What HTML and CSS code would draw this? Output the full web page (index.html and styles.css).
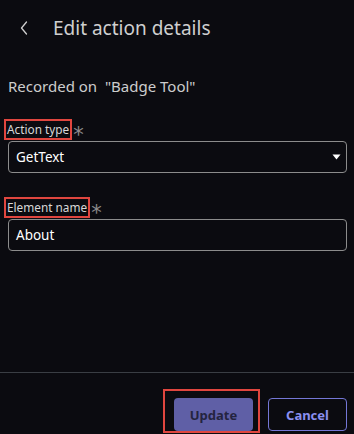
FILE: index.html
```html
<!DOCTYPE html>
<html>
<head>
<meta charset="utf-8">
<link rel="stylesheet" href="styles.css">
</head>
<body>
<div class="page">
  <div class="header">
    <svg class="back" width="8" height="14" viewBox="0 0 8 14"><path d="M6.5 1 L1.5 7 L6.5 13" fill="none" stroke="#d0d0d0" stroke-width="1.3" stroke-linecap="round" stroke-linejoin="round"/></svg>
    <span class="title">Edit action details</span>
  </div>
  <div class="recorded">Recorded on &nbsp;"Badge Tool"</div>
  <div class="field first">
    <div class="label-row"><span class="label hl">Action type</span><span class="req">*</span></div>
    <div class="box select"><span>GetText</span><svg width="9" height="6" viewBox="0 0 9 6"><path d="M0.5 0.5 H8.5 L4.5 5.5 Z" fill="#ffffff"/></svg></div>
  </div>
  <div class="field second">
    <div class="label-row"><span class="label hl">Element name</span><span class="req">*</span></div>
    <div class="box"><span>About</span></div>
  </div>
  <div class="spacer"></div>
  <div class="footer">
    <div class="hlbtn"><button class="btn primary">Update</button></div>
    <button class="btn secondary">Cancel</button>
  </div>
</div>
</body>
</html>
```
FILE: styles.css
```css
html, body {
  margin: 0;
  padding: 0;
  background: #0b0b10;
}
body {
  font-family: "Noto Sans", "Open Sans", sans-serif;
  color: #d6d6d6;
}
.page {
  width: 354px;
  height: 434px;
  display: flex;
  flex-direction: column;
}
.header {
  display: flex;
  align-items: center;
  height: 56px;
  padding-left: 20px;
}
.back {
  margin-right: 25px;
}
.title {
  font-size: 19px;
  color: #cfcfcf;
}
.recorded {
  margin-top: 20px;
  padding-left: 8px;
  font-size: 15px;
  color: #cdcdcd;
  line-height: 20px;
}
.field {
  padding: 0 7px 0 8px;
}
.first {
  margin-top: 23px;
}
.second {
  margin-top: 24px;
}
.label-row {
  display: flex;
  align-items: center;
  margin-left: -4px;
  height: 21px;
}
.label {
  font-size: 11.8px;
  color: #d8d8d8;
  line-height: 17px;
}
.hl {
  border: 2px solid #e0463f;
  padding: 0 1px;
}
.req {
  color: #8c8c8c;
  font-family: "DejaVu Sans", sans-serif;
  font-size: 21px;
  margin-left: 1px;
  line-height: 16px;
  position: relative;
  top: 5px;
}
.box {
  height: 32px;
  box-sizing: border-box;
  border: 1px solid #8c8c8c;
  border-radius: 4px;
  display: flex;
  align-items: center;
  justify-content: space-between;
  padding: 0 5px 0 7px;
  font-size: 13.5px;
  color: #ffffff;
  margin-top: 1px;
}
.spacer {
  flex: 1;
}
.footer {
  border-top: 1px solid #3a3e44;
  height: 60px;
  display: flex;
  align-items: flex-end;
  justify-content: flex-end;
  padding-right: 7px;
  padding-bottom: 1px;
  gap: 8px;
}
.hlbtn {
  border: 2px solid #e0463f;
  padding: 7px 5px 0 9px;
  height: 44px;
  box-sizing: border-box;
}
.btn {
  width: 79px;
  height: 33px;
  border-radius: 4px;
  font-family: "Noto Sans", "Open Sans", sans-serif;
  font-weight: bold;
  font-size: 13px;
  box-sizing: border-box;
  padding: 0;
}
.primary {
  background: #5f5fa6;
  border: none;
  color: #24243f;
}
.secondary {
  background: transparent;
  border: 1px solid #7477d6;
  color: #8a8ff0;
  margin-bottom: 2px;
}
```
